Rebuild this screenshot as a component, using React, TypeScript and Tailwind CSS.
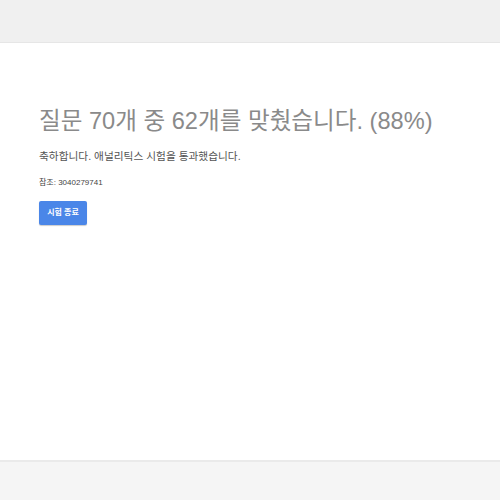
import React from 'react';

const App: React.FC = () => {
  return (
    <div
      className="min-h-[500px] flex flex-col bg-white"
      style={{ fontFamily: '"Liberation Sans", Arial, "Noto Sans CJK KR", sans-serif' }}
    >
      <header className="h-[43px] bg-[#f0f0f0] border-b border-[#e6e6e6]" />

      <main className="flex-1 px-[39px] pt-[62px]">
        <h1 className="text-[23.6px] leading-[32px] text-[#8a8a8a] font-normal whitespace-nowrap">
          질문 70개 중 62개를 맞췄습니다. (88%)
        </h1>
        <p className="mt-[12px] text-[10.7px] leading-[14px] text-[#555]">
          축하합니다. 애널리틱스 시험을 통과했습니다.
        </p>
        <p className="mt-[14px] text-[8px] leading-[12px] text-[#444]">참조: 3040279741</p>
        <button className="mt-[12px] w-[48px] h-[24px] bg-[#4a86e8] text-white text-[8px] font-bold rounded-[2px] shadow-[0_1px_1px_rgba(0,0,0,0.2)]">
          시험 종료
        </button>
      </main>

      <footer className="h-[40px] bg-[#f5f5f5] border-t-2 border-[#eaeaea]" />
    </div>
  );
};

export default App;
